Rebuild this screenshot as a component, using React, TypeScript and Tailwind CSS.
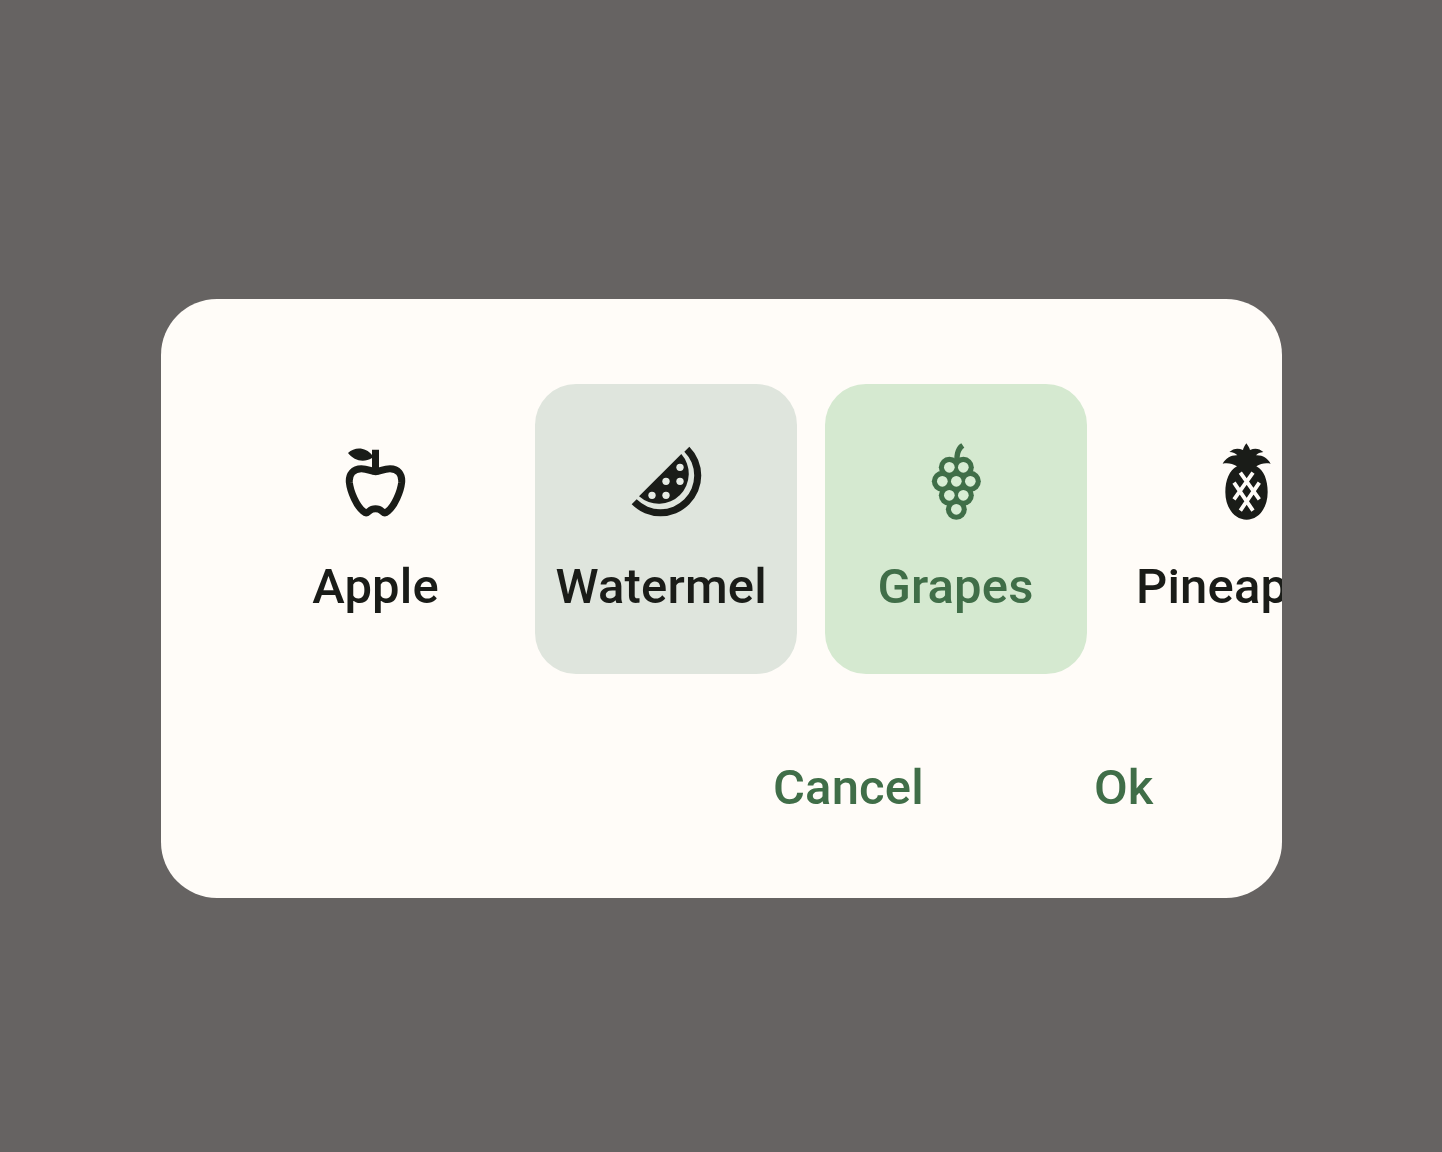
import type { ReactNode } from 'react';

function AppleIcon() {
  return (
    <svg viewBox="3 0 270 270" className="size-[90px] shrink-0" fill="none">
      <path
        d="M137 110C124 110 114 101 94 101C70 101 56 118 58 142C61 170 80 214 100 229C106 235 112 234 118 228C128 219 145 219 155 228C161 234 167 235 173 229C193 214 212 170 215 142C217 118 204 101 180 101C160 101 150 110 137 110Z"
        stroke="currentColor"
        strokeWidth="21"
      />
      <path
        d="M126 44H147V118H126V69C101 84 72 77 54 54C74 34 108 36 126 60Z"
        fill="currentColor"
      />
    </svg>
  );
}

function WatermelonIcon() {
  return (
    <svg viewBox="3 0 270 270" className="size-[90px] shrink-0" fill="currentColor">
      <path d="M208 35A122 122 0 0 1 35 208L50 193A101 101 0 0 0 193 50Z" />
      <path d="M184 57A90 90 0 0 1 57 184Z" />
      <g className="fill-[#e6ebe4]">
        <circle cx="180" cy="97" r="11" />
        <circle cx="138" cy="139" r="11" />
        <circle cx="180" cy="139" r="11" />
        <circle cx="96" cy="181" r="11" />
        <circle cx="138" cy="181" r="11" />
      </g>
    </svg>
  );
}

const GRAPES = [
  [118, 97],
  [160, 97],
  [97, 139],
  [139, 139],
  [181, 139],
  [118, 181],
  [160, 181],
  [139, 223],
];

function GrapesIcon() {
  return (
    <svg viewBox="3 0 270 270" className="size-[90px] shrink-0" fill="currentColor">
      {GRAPES.map(([x, y]) => (
        <circle key={`${x}-${y}`} cx={x} cy={y} r="31.5" />
      ))}
      <path d="M133 84C131 52 140 32 154 25L163 38C151 46 148 60 149 84Z" />
      <g className="fill-[#d8edd4]">
        {GRAPES.map(([x, y]) => (
          <circle key={`${x}-${y}`} cx={x} cy={y} r="16" />
        ))}
      </g>
    </svg>
  );
}

function PineappleIcon() {
  return (
    <svg viewBox="-3 0 270 270" className="size-[90px] shrink-0" fill="currentColor">
      <path d="M133 25C139 33 143 40 144 45C159 38 173 41 184 51C174 52 167 55 162 61C182 60 197 70 206 86C191 83 176 85 163 94C186 105 197 136 197 171C197 220 169 254 134 254C99 254 70 220 70 171C70 136 82 106 105 94C91 85 76 83 62 86C71 70 87 60 106 61C101 55 93 51 82 51C94 40 108 38 123 45C124 40 127 33 133 25Z" />
      <g stroke="#fffcf8" strokeWidth="11.5" fill="none">
        <path d="M115 113L172 193M153 113L96 193M96 143L153 227M172 143L115 227" />
      </g>
    </svg>
  );
}

type OptionProps = { icon: ReactNode; label: string; tone?: string; align?: string };

function Option({ icon, label, tone = 'text-[#1a1c18]', align = 'text-center' }: OptionProps) {
  return (
    <button
      className={`flex h-[290px] w-[262px] shrink-0 flex-col items-center rounded-[41px] px-[21px] pt-[51px] ${tone}`}
    >
      {icon}
      <span className={`mt-[27px] w-full whitespace-nowrap leading-[70px] ${align}`}>{label}</span>
    </button>
  );
}

export default function App() {
  return (
    <main className="flex h-[1152px] w-[1442px] items-start justify-center overflow-hidden bg-[#666362] pt-[299px] font-['Roboto',sans-serif] text-[49px] font-medium tracking-[0.15px]">
      <section
        role="dialog"
        className="flex h-[599px] w-[1121px] flex-col overflow-hidden rounded-[56px] bg-[#fffcf8] pt-[85px] pl-[84px]"
      >
        <div className="flex gap-[28px]">
          <Option icon={<AppleIcon />} label="Apple" />
          <Option
            icon={<WatermelonIcon />}
            label="Watermel"
            tone="bg-[#dfe5dd] text-[#1a1c18]"
            align="text-left"
          />
          <Option icon={<GrapesIcon />} label="Grapes" tone="bg-[#d5e9d0] text-[#406e48]" />
          <Option icon={<PineappleIcon />} label="Pineapple" />
        </div>
        <div className="mt-[79px] flex justify-end gap-[170px] pr-[128px] leading-[70px] text-[#406e48]">
          <button>Cancel</button>
          <button>Ok</button>
        </div>
      </section>
    </main>
  );
}
